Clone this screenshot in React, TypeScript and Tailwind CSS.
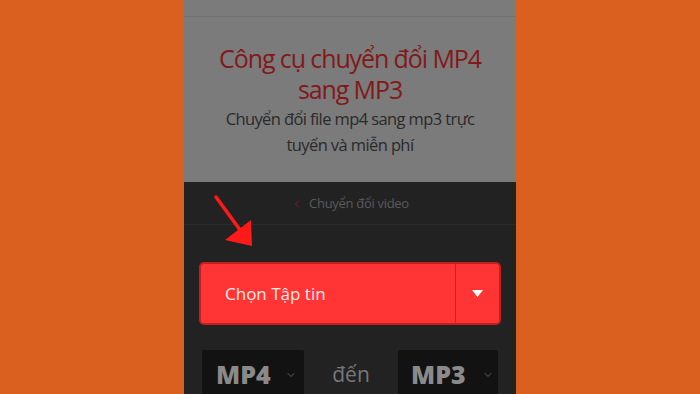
import { ChevronDown, ChevronLeft } from 'lucide-react'

export default function App() {
    return (
        <div className="flex h-[394px] w-[700px] justify-center overflow-hidden bg-[#d9601f]" style={{ fontFamily: '"Open Sans", "Noto Sans", sans-serif' }}>
            <div className="relative flex h-full w-[332px] flex-col overflow-hidden bg-[#222222]">
                {/* Header */}
                <div className="flex h-[182px] shrink-0 flex-col bg-[#7b7b7b]">
                    <div className="h-[17px] shrink-0 border-b border-[#717171]" />
                    <h1 className="mt-[26px] px-3 text-center text-[25px] leading-[31px] tracking-[-1.1px] text-[#821919]">
                        Công cụ chuyển đổi MP4 sang MP3
                    </h1>
                    <p className="mt-[1px] px-5 text-center text-[16.5px] leading-[26px] tracking-[-0.6px] text-[#2a2a2a]">
                        Chuyển đổi file mp4 sang mp3 trực tuyến và miễn phí
                    </p>
                </div>

                {/* Breadcrumb */}
                <div className="flex h-[43px] shrink-0 items-center justify-center gap-[6px] border-b border-[#2b2b2b] pt-[1px] text-[13px] tracking-[-0.3px] text-[#5a5a5a]">
                    <ChevronLeft className="h-[12px] w-[12px] text-[#7a2222]" strokeWidth={2} />
                    <span>Chuyển đổi video</span>
                </div>

                {/* Upload button */}
                <div className="mt-[37px] shrink-0 px-[15px]">
                    <div className="flex h-[63px] overflow-hidden rounded-[5px] border-2 border-[#c41f1f] bg-[#ff3535]">
                        <div className="flex flex-1 items-center pl-[24px] text-[17px] text-[#ffe9e9]">Chọn Tập tin</div>
                        <div className="flex w-[44px] items-center justify-center border-l border-[#c72323]">
                            <svg width="11" height="7" viewBox="0 0 11 7">
                                <path d="M0 0 L11 0 L5.5 7 Z" fill="#ffffff" />
                            </svg>
                        </div>
                    </div>
                </div>

                {/* Format selects */}
                <div className="mt-[25px] flex shrink-0 items-start px-[18px]">
                    <div className="flex h-[50px] w-[102px] items-center rounded-[2px] bg-[#121212] pl-[14px]">
                        <span className="text-[25px] font-extrabold text-[#8a8a8a]">MP4</span>
                        <ChevronDown className="ml-[14px] h-[12px] w-[12px] text-[#777777]" strokeWidth={1.5} />
                    </div>
                    <div className="flex h-[50px] flex-1 items-center justify-center text-[21px] text-[#777777]">đến</div>
                    <div className="flex h-[50px] w-[100px] items-center rounded-[2px] bg-[#121212] pl-[13px]">
                        <span className="text-[25px] font-extrabold text-[#8a8a8a]">MP3</span>
                        <ChevronDown className="ml-[16px] h-[12px] w-[12px] text-[#777777]" strokeWidth={1.5} />
                    </div>
                </div>

                {/* Red arrow overlay */}
                <svg className="absolute left-[24px] top-[192px]" width="50" height="58" viewBox="0 0 50 58">
                    <path d="M8 5 L35 42" stroke="#ff1a1a" strokeWidth="3.5" strokeLinecap="round" />
                    <path d="M44 54 L17 48 L43 28 Z" fill="#ff1a1a" />
                </svg>
            </div>
        </div>
    )
}
